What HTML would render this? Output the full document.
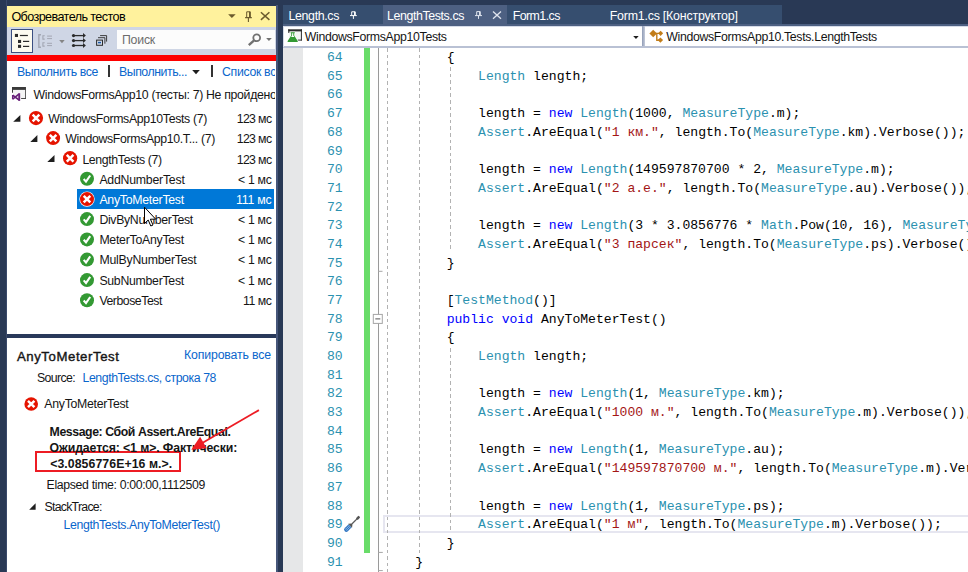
<!DOCTYPE html>
<html lang="ru"><head><meta charset="utf-8"><title>Обозреватель тестов</title>
<style>
html,body{margin:0;padding:0}
body{width:968px;height:572px;overflow:hidden;background:#293955;position:relative;font-family:"Liberation Sans",sans-serif}
.a{position:absolute}
.t{position:absolute;white-space:pre;line-height:16px;font-family:"Liberation Sans",sans-serif}
.c{position:absolute;white-space:pre;line-height:18px;font-size:13.100px;font-family:"Liberation Mono",monospace}
svg{position:absolute;overflow:visible}
</style></head><body>
<!-- ===== left panel ===== -->
<div class="a" style="left:6px;top:0;width:1.2px;height:572px;background:#3a4a6b"></div>
<div class="a" style="left:7px;top:5.5px;width:269.2px;height:567px;background:#fff"></div>
<div class="a" style="left:276.2px;top:5px;width:1.6px;height:567px;background:#46567a"></div>
<div class="a" style="left:7px;top:5.5px;width:269.2px;height:21.5px;background:#fff29d"></div>
<div class="a" style="left:7px;top:27px;width:269.2px;height:27.8px;background:#cfd6e5"></div>
<div class="a" style="left:7px;top:54.8px;width:269.2px;height:6.2px;background:#fe0000"></div>
<div class="a" style="left:7px;top:333.7px;width:269.2px;height:4.1px;background:#29395a"></div>
<!-- toolbar button 1 -->
<div class="a" style="left:11.2px;top:29.1px;width:21.7px;height:23.8px;box-sizing:border-box;border:1px solid #3b4f81;background:#fdfbf0"></div>
<!-- search box -->
<div class="a" style="left:116.6px;top:29.8px;width:158.8px;height:19.3px;background:#fcfcfc"></div>
<!-- selected row -->
<div class="a" style="left:77px;top:189px;width:196.7px;height:19.8px;background:#0078d7"></div>
<!-- separators in links row -->
<div class="a" style="left:108.2px;top:64.8px;width:1.8px;height:12.2px;background:#333"></div>
<div class="a" style="left:211.2px;top:64.8px;width:1.8px;height:12.2px;background:#333"></div>
<!-- red annotation rect -->
<div class="a" style="left:34.5px;top:451.3px;width:146.4px;height:21.2px;box-sizing:border-box;border:2px solid #ed1c24"></div>

<!-- ===== editor ===== -->
<div class="a" style="left:283px;top:5.3px;width:99.8px;height:19px;background:#364e6f"></div>
<div class="a" style="left:382.8px;top:5.3px;width:124.2px;height:21px;background:#4d6082"></div>
<div class="a" style="left:507px;top:5.3px;width:274.7px;height:19px;background:#364e6f"></div>
<div class="a" style="left:283px;top:23.8px;width:685px;height:2.3px;background:#4d6082"></div>
<div class="a" style="left:283px;top:26.1px;width:685px;height:546px;background:#fff"></div>
<!-- nav bar -->
<div class="a" style="left:283px;top:46.3px;width:685px;height:1.4px;background:#b9c1d4"></div>
<div class="a" style="left:283px;top:26.1px;width:685px;height:0.9px;background:#d5dbe8"></div>
<div class="a" style="left:283px;top:26.1px;width:1.4px;height:20.5px;background:#d5dbe8"></div>
<div class="a" style="left:641.6px;top:26.1px;width:3.6px;height:20.4px;background:linear-gradient(90deg,#8f9bb5,#c5ccdb)"></div>
<!-- margin -->
<div class="a" style="left:283px;top:47.7px;width:19.6px;height:525px;background:#e6e7e8"></div>
<!-- green change bar -->
<div class="a" style="left:364.4px;top:47.7px;width:5.7px;height:505px;background:#69dc69"></div>
<!-- outlining line -->
<div class="a" style="left:377.7px;top:47.7px;width:1.2px;height:525px;background:#9a9a9a"></div>
<!-- current line box -->
<div class="a" style="left:383.2px;top:515.2px;width:590px;height:17.7px;box-sizing:border-box;border:2px solid #e6e6f0"></div>
<!-- indent guides -->
<div class="a" style="left:387px;top:47.7px;width:1.1px;height:525px;background:repeating-linear-gradient(to bottom,#b2b2b2 0,#b2b2b2 3.6px,transparent 3.6px,transparent 6.6px)"></div>
<div class="a" style="left:419px;top:47.7px;width:1.1px;height:508px;background:repeating-linear-gradient(to bottom,#b2b2b2 0,#b2b2b2 3.6px,transparent 3.6px,transparent 6.6px)"></div>
<div class="a" style="left:450px;top:67.3px;width:1.1px;height:184px;background:repeating-linear-gradient(to bottom,#b2b2b2 0,#b2b2b2 3.6px,transparent 3.6px,transparent 6.6px)"></div>
<div class="a" style="left:450px;top:347.5px;width:1.1px;height:184px;background:repeating-linear-gradient(to bottom,#b2b2b2 0,#b2b2b2 3.6px,transparent 3.6px,transparent 6.6px)"></div>

<svg width="968" height="572" style="left:0;top:0" viewBox="0 0 968 572">
<path d="M228.1,14.2L235.7,14.2L231.9,18Z" fill="#6b5b2d"/>
<path d="M246.7,17.4V11.8H250.2V17.4" stroke="#6b5b2d" stroke-width="1" fill="none"/><path d="M249.8,11.8V17.4" stroke="#6b5b2d" stroke-width="1.6" fill="none"/><path d="M245.1,17.6H251.8M248.4,17.6V21.9" stroke="#6b5b2d" stroke-width="1.1" fill="none"/>
<path d="M260.9,12.2L269.4,19.9M269.4,12.2L260.9,19.9" stroke="#6b5b2d" stroke-width="1.5" fill="none"/>
<rect x="14.9" y="33.9" width="3.1" height="3.1" fill="#2b2b2b"/><rect x="19.9" y="34.9" width="8" height="1.2" fill="#2b2b2b"/>
<rect x="18" y="39.9" width="3.1" height="3.1" fill="#2b2b2b"/><rect x="23" y="40.8" width="6.2" height="1.2" fill="#2b2b2b"/>
<rect x="18" y="44.8" width="3.1" height="3.1" fill="#2b2b2b"/><rect x="23" y="45.8" width="6.2" height="1.2" fill="#2b2b2b"/>
<path d="M41,34.8H38.85V47.2H41" stroke="#a3a7b3" stroke-width="1.4" fill="none"/>
<path d="M44.7,35.8H42.9V39.1H44.7M44.7,42.7H42.9V46.1H44.7" stroke="#a3a7b3" stroke-width="1.1" fill="none"/>
<path d="M47.1,36.1H52M47.1,38.6H52M47.1,43.3H52M47.1,45.6H52" stroke="#a3a7b3" stroke-width="1" fill="none"/>
<path d="M59.2,40L64.7,40L61.95,43.3Z" fill="#858585"/>
<circle cx="73.5" cy="35.6" r="1.6" fill="#2b2b2b"/><path d="M73.5,35.6H84.5" stroke="#2b2b2b" stroke-width="1.3" fill="none"/><path d="M83,33.1L85.9,35.6L83,38.1Z" fill="#2b2b2b"/>
<circle cx="73.5" cy="40.6" r="1.6" fill="#2b2b2b"/><path d="M73.5,40.6H84.5" stroke="#2b2b2b" stroke-width="1.3" fill="none"/><path d="M83,38.1L85.9,40.6L83,43.1Z" fill="#2b2b2b"/>
<circle cx="73.5" cy="45.5" r="1.6" fill="#2b2b2b"/><path d="M73.5,45.5H84.5" stroke="#2b2b2b" stroke-width="1.3" fill="none"/><path d="M83,43.0L85.9,45.5L83,48.0Z" fill="#2b2b2b"/>
<rect x="96.6" y="40.1" width="5.9" height="5.2" stroke="#2b2b2b" stroke-width="1" fill="none"/><rect x="98" y="41.9" width="3" height="1.4" fill="#1a5aa8"/>
<path d="M98,37.7H104.9V43.7" stroke="#2b2b2b" stroke-width="0.9" fill="none"/><path d="M100.1,35.6H106.6V41.6" stroke="#2b2b2b" stroke-width="0.9" fill="none"/>
<circle cx="256.7" cy="37.8" r="3.4" stroke="#717171" stroke-width="1.8" fill="none"/><path d="M254.4,40.1L248.8,45.1" stroke="#717171" stroke-width="2.4" fill="none"/>
<path d="M266.1,38L271.8,38L268.95,40.9Z" fill="#717171"/>
<path d="M192.2,69.9L199.8,69.9L196,74.2Z" fill="#1e1e1e"/>
<rect x="13" y="89.9" width="12" height="8.1" fill="#f5f5f5"/>
<path d="M12,87H25.8V89.9H12Z" fill="#3a3a3a"/><path d="M12,87H13V92.7H12Z" fill="#3a3a3a"/><path d="M25,87H25.8V98.9H25Z" fill="#3a3a3a"/><path d="M21.1,98H25.8V98.9H21.1Z" fill="#3a3a3a"/>
<path d="M12.7,95.2L18.9,99.9M12.7,99.2L18.9,94.2" stroke="#68217a" stroke-width="1.7" fill="none"/><path d="M12.5,95V99.3" stroke="#68217a" stroke-width="1.1" fill="none"/><path d="M19.2,93.2V100.9" stroke="#68217a" stroke-width="1.9" fill="none"/>
<path d="M20.4,114.9L20.4,121.8L13.2,121.8Z" fill="#1e1e1e"/>
<path d="M37.4,135.1L37.4,141.9L30.3,141.9Z" fill="#1e1e1e"/>
<path d="M54.5,154.9L54.5,161.9L47.3,161.9Z" fill="#1e1e1e"/>
<circle cx="36" cy="118.05" r="7.1" fill="#e51400"/><path d="M32.66,114.71L39.34,121.39M39.34,114.71L32.66,121.39" stroke="#fff" stroke-width="2.5" stroke-linecap="butt" fill="none"/>
<circle cx="53.1" cy="138.1" r="7.0" fill="#e51400"/><path d="M49.81,134.81L56.39,141.39M56.39,134.81L49.81,141.39" stroke="#fff" stroke-width="2.5" stroke-linecap="butt" fill="none"/>
<circle cx="70.1" cy="158.2" r="7.1" fill="#e51400"/><path d="M66.76,154.86L73.44,161.54M73.44,154.86L66.76,161.54" stroke="#fff" stroke-width="2.5" stroke-linecap="butt" fill="none"/>
<circle cx="87" cy="178.7" r="7.0" fill="#339933"/><path d="M83.70,179.00L86.00,181.60L90.20,175.50" stroke="#fff" stroke-width="2.1" fill="none" stroke-linejoin="miter"/>
<circle cx="87" cy="199.1" r="7.7" fill="#fff"/><circle cx="87" cy="199.1" r="7.0" fill="#e51400"/><path d="M83.71,195.81L90.29,202.39M90.29,195.81L83.71,202.39" stroke="#fff" stroke-width="2.5" stroke-linecap="butt" fill="none"/>
<circle cx="87" cy="219.1" r="7.0" fill="#339933"/><path d="M83.70,219.40L86.00,222.00L90.20,215.90" stroke="#fff" stroke-width="2.1" fill="none" stroke-linejoin="miter"/>
<circle cx="87" cy="239.4" r="7.0" fill="#339933"/><path d="M83.70,239.70L86.00,242.30L90.20,236.20" stroke="#fff" stroke-width="2.1" fill="none" stroke-linejoin="miter"/>
<circle cx="87" cy="259.6" r="7.0" fill="#339933"/><path d="M83.70,259.90L86.00,262.50L90.20,256.40" stroke="#fff" stroke-width="2.1" fill="none" stroke-linejoin="miter"/>
<circle cx="87" cy="280.1" r="7.0" fill="#339933"/><path d="M83.70,280.40L86.00,283.00L90.20,276.90" stroke="#fff" stroke-width="2.1" fill="none" stroke-linejoin="miter"/>
<circle cx="87" cy="300.2" r="7.0" fill="#339933"/><path d="M83.70,300.50L86.00,303.10L90.20,297.00" stroke="#fff" stroke-width="2.1" fill="none" stroke-linejoin="miter"/>
<circle cx="31.2" cy="404" r="6.8" fill="#e51400"/><path d="M28.00,400.80L34.40,407.20M34.40,400.80L28.00,407.20" stroke="#fff" stroke-width="2.5" stroke-linecap="butt" fill="none"/>
<path d="M35.6,503.3L35.6,509.7L29.2,509.7Z" fill="#1e1e1e"/>
<path d="M351.7,15.3V11.8H355.1V15.3" stroke="#fff" stroke-width="1" fill="none"/><path d="M354.8,11.8V15.3" stroke="#fff" stroke-width="1.5" fill="none"/><path d="M350,15.6H356.8M353.4,15.6V18.9" stroke="#fff" stroke-width="1" fill="none"/>
<path d="M476.7,15.3V11.6H480.1V15.3" stroke="#dfe4ee" stroke-width="1" fill="none"/><path d="M479.8,11.6V15.3" stroke="#dfe4ee" stroke-width="1.5" fill="none"/><path d="M475,15.6H482M478.5,15.6V18.9" stroke="#dfe4ee" stroke-width="1" fill="none"/>
<path d="M493,11.5L501,18.8M501,11.5L493,18.8" stroke="#dfe4ee" stroke-width="1.3" fill="none"/>
<rect x="289" y="31.4" width="12" height="8.6" fill="#f5f5f5"/>
<path d="M288.3,29.3H301.9V31.4H288.3Z" fill="#2d2d2d"/><path d="M288.3,29.3H289.3V33H288.3Z" fill="#2d2d2d"/><path d="M300.9,29.3H301.9V40.6H300.9Z" fill="#2d2d2d"/><path d="M297.5,39.6H301.9V40.6H297.5Z" fill="#2d2d2d"/>
<path d="M290.6,32.3H294.8V33.3H294.2V35.6L297.9,41.2Q298,41.9 297.2,41.9H288.1Q287.3,41.9 287.5,41.2L291.2,35.6V33.3H290.6Z" fill="#339933" stroke="#fff" stroke-width="1.2" paint-order="stroke"/><path d="M292.1,33.3H293.3V35.4L294.4,37.1H291L292.1,35.4Z" fill="#fff"/>
<path d="M633.2,35.9L638.7,35.9L635.95,39Z" fill="#1e1e1e"/>
<path d="M653.2,29.8L657,33.4L653.2,37.2L649.4,33.4Z" fill="#c27d1a"/>
<path d="M656,33.4H659.5M656.8,33.4V40.2H659.5" stroke="#c27d1a" stroke-width="1.4" fill="none"/>
<path d="M660.6,30.8L663.1,33.3L660.6,35.9L658.1,33.3Z" fill="#c27d1a"/><path d="M660.4,37.5L663.1,40.1L660.4,42.8L657.7,40.1Z" fill="#c27d1a"/>
<rect x="373.3" y="314.4" width="9" height="9" fill="#fff" stroke="#a5a5a5" stroke-width="1"/><path d="M375.3,318.9H380.3" stroke="#555" stroke-width="1" fill="none"/>
<path d="M378,271.3H382.5M378,552.4H382.8M378,570.6H382.8" stroke="#a5a5a5" stroke-width="1" fill="none"/>
<g transform="translate(344.9,531) rotate(-45)"><path d="M2,-2.2H7.4V2.2H2A2.2,2.2 0 0 1 2,-2.2Z" fill="#2f75c0"/><path d="M2.6,-2.2V2.2M4.3,-2.2V2.2M6,-2.2V2.2M1,-0.7H7.4M1,0.8H7.4" stroke="#9cc3ee" stroke-width="0.5" fill="none"/><path d="M7.4,-2.7L10,-0.7V0.7L7.4,2.7Z" fill="#555"/><rect x="9.8" y="-0.65" width="8" height="1.3" fill="#5a5a5a"/><rect x="16.6" y="-1.3" width="4" height="2.6" rx="1" fill="#555"/></g>
</svg>
<div class="a" style="left:0;top:0;width:275.4px;height:572px;overflow:hidden">
<span class="t" style="left:11.40px;top:9.43px;font-size:12.6px;color:#000;letter-spacing:-0.590px;">Обозреватель тестов</span>
<span class="t" style="left:122.00px;top:32.24px;font-size:12.3px;color:#6d6d6d;letter-spacing:-0.216px;">Поиск</span>
<span class="t" style="left:17.00px;top:64.24px;font-size:12.3px;color:#0a66cc;letter-spacing:-0.381px;">Выполнить все</span>
<span class="t" style="left:119.00px;top:64.24px;font-size:12.3px;color:#0a66cc;letter-spacing:-0.451px;">Выполнить...</span>
<span class="t" style="left:222.00px;top:64.24px;font-size:12.3px;color:#0a66cc;letter-spacing:-0.319px;">Список вс</span>
<span class="t" style="left:33.50px;top:86.94px;font-size:12.3px;color:#151515;letter-spacing:-0.323px;">WindowsFormsApp10 (тесты: 7) Не пройдено</span>
<span class="t" style="left:48.20px;top:110.64px;font-size:12.3px;color:#151515;letter-spacing:-0.332px;">WindowsFormsApp10Tests (7)</span>
<span class="t" style="left:236.70px;top:110.64px;font-size:12.3px;color:#151515;letter-spacing:-0.624px;">123 мс</span>
<span class="t" style="left:65.30px;top:130.84px;font-size:12.3px;color:#151515;letter-spacing:-0.340px;">WindowsFormsApp10.T... (7)</span>
<span class="t" style="left:236.70px;top:130.84px;font-size:12.3px;color:#151515;letter-spacing:-0.624px;">123 мс</span>
<span class="t" style="left:82.40px;top:151.84px;font-size:12.3px;color:#151515;letter-spacing:-0.358px;">LengthTests (7)</span>
<span class="t" style="left:236.70px;top:151.84px;font-size:12.3px;color:#151515;letter-spacing:-0.624px;">123 мс</span>
<span class="t" style="left:99.40px;top:171.74px;font-size:12.3px;color:#151515;letter-spacing:-0.229px;">AddNumberTest</span>
<span class="t" style="left:238.00px;top:171.74px;font-size:12.3px;color:#151515;letter-spacing:-0.328px;">&lt; 1 мс</span>
<span class="t" style="left:99.40px;top:191.54px;font-size:12.3px;color:#ffffff;letter-spacing:-0.262px;">AnyToMeterTest</span>
<span class="t" style="left:236.00px;top:191.54px;font-size:12.3px;color:#ffffff;letter-spacing:-0.203px;">111 мс</span>
<span class="t" style="left:99.40px;top:212.04px;font-size:12.3px;color:#151515;letter-spacing:-0.327px;">DivByNumberTest</span>
<span class="t" style="left:238.00px;top:212.04px;font-size:12.3px;color:#151515;letter-spacing:-0.328px;">&lt; 1 мс</span>
<span class="t" style="left:99.40px;top:231.64px;font-size:12.3px;color:#151515;letter-spacing:-0.262px;">MeterToAnyTest</span>
<span class="t" style="left:238.00px;top:231.64px;font-size:12.3px;color:#151515;letter-spacing:-0.328px;">&lt; 1 мс</span>
<span class="t" style="left:99.40px;top:251.94px;font-size:12.3px;color:#151515;letter-spacing:-0.230px;">MulByNumberTest</span>
<span class="t" style="left:238.00px;top:251.94px;font-size:12.3px;color:#151515;letter-spacing:-0.328px;">&lt; 1 мс</span>
<span class="t" style="left:99.40px;top:272.84px;font-size:12.3px;color:#151515;letter-spacing:-0.282px;">SubNumberTest</span>
<span class="t" style="left:238.00px;top:272.84px;font-size:12.3px;color:#151515;letter-spacing:-0.328px;">&lt; 1 мс</span>
<span class="t" style="left:99.40px;top:292.64px;font-size:12.3px;color:#151515;letter-spacing:-0.472px;">VerboseTest</span>
<span class="t" style="left:243.00px;top:292.64px;font-size:12.3px;color:#151515;letter-spacing:-0.459px;">11 мс</span>
<span class="t" style="left:16.90px;top:348.63px;font-size:13.2px;color:#151515;letter-spacing:0.575px;-webkit-text-stroke:0.38px #151515;">AnyToMeterTest</span>
<span class="t" style="left:184.00px;top:346.74px;font-size:12.3px;color:#0a66cc;letter-spacing:-0.144px;">Копировать все</span>
<span class="t" style="left:37.00px;top:370.24px;font-size:12.3px;color:#151515;letter-spacing:-0.627px;">Source:</span>
<span class="t" style="left:82.50px;top:370.24px;font-size:12.3px;color:#0a66cc;letter-spacing:-0.416px;">LengthTests.cs, строка 78</span>
<span class="t" style="left:44.30px;top:395.54px;font-size:12.3px;color:#151515;letter-spacing:-0.284px;">AnyToMeterTest</span>
<span class="t" style="left:49.60px;top:423.74px;font-size:12.3px;color:#151515;font-weight:700;letter-spacing:-0.419px;">Message: Сбой Assert.AreEqual.</span>
<span class="t" style="left:49.60px;top:439.84px;font-size:12.3px;color:#151515;font-weight:700;letter-spacing:-0.101px;">Ожидается: &lt;1 м&gt;. Фактически:</span>
<span class="t" style="left:50.20px;top:455.74px;font-size:12.3px;color:#151515;font-weight:700;letter-spacing:0.063px;">&lt;3.0856776E+16 м.&gt;.</span>
<span class="t" style="left:46.60px;top:476.64px;font-size:12.3px;color:#151515;letter-spacing:-0.346px;">Elapsed time: 0:00:00,1112509</span>
<span class="t" style="left:44.50px;top:498.64px;font-size:12.3px;color:#151515;letter-spacing:-0.732px;">StackTrace:</span>
<span class="t" style="left:63.50px;top:516.64px;font-size:12.3px;color:#0a66cc;letter-spacing:-0.343px;">LengthTests.AnyToMeterTest()</span>
</div>
<span class="t" style="left:288.50px;top:8.40px;font-size:12.4px;color:#ffffff;letter-spacing:-0.359px;">Length.cs</span>
<span class="t" style="left:387.00px;top:8.40px;font-size:12.4px;color:#ffffff;letter-spacing:-0.404px;">LengthTests.cs</span>
<span class="t" style="left:512.70px;top:8.40px;font-size:12.4px;color:#ffffff;letter-spacing:-0.568px;">Form1.cs</span>
<span class="t" style="left:609.70px;top:8.40px;font-size:12.4px;color:#ffffff;letter-spacing:-0.210px;">Form1.cs [Конструктор]</span>
<span class="t" style="left:304.70px;top:29.04px;font-size:12.3px;color:#151515;letter-spacing:-0.317px;">WindowsFormsApp10Tests</span>
<span class="t" style="left:666.30px;top:29.04px;font-size:12.3px;color:#151515;letter-spacing:-0.332px;">WindowsFormsApp10.Tests.LengthTests</span>
<span class="c" style="left:326.88px;top:49.00px;color:#2b91af">64</span>
<span class="c" style="left:446.64px;top:49.00px;color:#000000">{</span>
<span class="c" style="left:326.88px;top:68.00px;color:#2b91af">65</span>
<span class="c" style="left:478.08px;top:68.00px;color:#2b91af">Length</span>
<span class="c" style="left:525.24px;top:68.00px;color:#000000"> length;</span>
<span class="c" style="left:326.88px;top:86.00px;color:#2b91af">66</span>
<span class="c" style="left:326.88px;top:105.00px;color:#2b91af">67</span>
<span class="c" style="left:478.08px;top:105.00px;color:#000000">length = </span>
<span class="c" style="left:548.82px;top:105.00px;color:#0000ff">new</span>
<span class="c" style="left:572.40px;top:105.00px;color:#000000"> </span>
<span class="c" style="left:580.26px;top:105.00px;color:#2b91af">Length</span>
<span class="c" style="left:627.42px;top:105.00px;color:#000000">(1000, </span>
<span class="c" style="left:682.44px;top:105.00px;color:#2b91af">MeasureType</span>
<span class="c" style="left:768.90px;top:105.00px;color:#000000">.m);</span>
<span class="c" style="left:326.88px;top:124.00px;color:#2b91af">68</span>
<span class="c" style="left:478.08px;top:124.00px;color:#2b91af">Assert</span>
<span class="c" style="left:525.24px;top:124.00px;color:#000000">.AreEqual(</span>
<span class="c" style="left:603.84px;top:124.00px;color:#a31515">&quot;1 км.&quot;</span>
<span class="c" style="left:658.86px;top:124.00px;color:#000000">, length.To(</span>
<span class="c" style="left:753.18px;top:124.00px;color:#2b91af">MeasureType</span>
<span class="c" style="left:839.64px;top:124.00px;color:#000000">.km).Verbose());</span>
<span class="c" style="left:326.88px;top:143.00px;color:#2b91af">69</span>
<span class="c" style="left:326.88px;top:161.00px;color:#2b91af">70</span>
<span class="c" style="left:478.08px;top:161.00px;color:#000000">length = </span>
<span class="c" style="left:548.82px;top:161.00px;color:#0000ff">new</span>
<span class="c" style="left:572.40px;top:161.00px;color:#000000"> </span>
<span class="c" style="left:580.26px;top:161.00px;color:#2b91af">Length</span>
<span class="c" style="left:627.42px;top:161.00px;color:#000000">(149597870700 * 2, </span>
<span class="c" style="left:776.76px;top:161.00px;color:#2b91af">MeasureType</span>
<span class="c" style="left:863.22px;top:161.00px;color:#000000">.m);</span>
<span class="c" style="left:326.88px;top:180.00px;color:#2b91af">71</span>
<span class="c" style="left:478.08px;top:180.00px;color:#2b91af">Assert</span>
<span class="c" style="left:525.24px;top:180.00px;color:#000000">.AreEqual(</span>
<span class="c" style="left:603.84px;top:180.00px;color:#a31515">&quot;2 а.е.&quot;</span>
<span class="c" style="left:666.72px;top:180.00px;color:#000000">, length.To(</span>
<span class="c" style="left:761.04px;top:180.00px;color:#2b91af">MeasureType</span>
<span class="c" style="left:847.50px;top:180.00px;color:#000000">.au).Verbose());</span>
<span class="c" style="left:326.88px;top:199.00px;color:#2b91af">72</span>
<span class="c" style="left:326.88px;top:217.00px;color:#2b91af">73</span>
<span class="c" style="left:478.08px;top:217.00px;color:#000000">length = </span>
<span class="c" style="left:548.82px;top:217.00px;color:#0000ff">new</span>
<span class="c" style="left:572.40px;top:217.00px;color:#000000"> </span>
<span class="c" style="left:580.26px;top:217.00px;color:#2b91af">Length</span>
<span class="c" style="left:627.42px;top:217.00px;color:#000000">(3 * 3.0856776 * </span>
<span class="c" style="left:761.04px;top:217.00px;color:#2b91af">Math</span>
<span class="c" style="left:792.48px;top:217.00px;color:#000000">.Pow(10, 16), </span>
<span class="c" style="left:902.52px;top:217.00px;color:#2b91af">MeasureType</span>
<span class="c" style="left:988.98px;top:217.00px;color:#000000">.ps);</span>
<span class="c" style="left:326.88px;top:236.00px;color:#2b91af">74</span>
<span class="c" style="left:478.08px;top:236.00px;color:#2b91af">Assert</span>
<span class="c" style="left:525.24px;top:236.00px;color:#000000">.AreEqual(</span>
<span class="c" style="left:603.84px;top:236.00px;color:#a31515">&quot;3 парсек&quot;</span>
<span class="c" style="left:682.44px;top:236.00px;color:#000000">, length.To(</span>
<span class="c" style="left:776.76px;top:236.00px;color:#2b91af">MeasureType</span>
<span class="c" style="left:863.22px;top:236.00px;color:#000000">.ps).Verbose());</span>
<span class="c" style="left:326.88px;top:255.00px;color:#2b91af">75</span>
<span class="c" style="left:446.64px;top:255.00px;color:#000000">}</span>
<span class="c" style="left:326.88px;top:273.00px;color:#2b91af">76</span>
<span class="c" style="left:326.88px;top:292.00px;color:#2b91af">77</span>
<span class="c" style="left:446.64px;top:292.00px;color:#000000">[</span>
<span class="c" style="left:454.50px;top:292.00px;color:#2b91af">TestMethod</span>
<span class="c" style="left:533.10px;top:292.00px;color:#000000">()]</span>
<span class="c" style="left:326.88px;top:311.00px;color:#2b91af">78</span>
<span class="c" style="left:446.64px;top:311.00px;color:#0000ff">public</span>
<span class="c" style="left:493.80px;top:311.00px;color:#000000"> </span>
<span class="c" style="left:501.66px;top:311.00px;color:#0000ff">void</span>
<span class="c" style="left:533.10px;top:311.00px;color:#000000"> AnyToMeterTest()</span>
<span class="c" style="left:326.88px;top:329.00px;color:#2b91af">79</span>
<span class="c" style="left:446.64px;top:329.00px;color:#000000">{</span>
<span class="c" style="left:326.88px;top:348.00px;color:#2b91af">80</span>
<span class="c" style="left:478.08px;top:348.00px;color:#2b91af">Length</span>
<span class="c" style="left:525.24px;top:348.00px;color:#000000"> length;</span>
<span class="c" style="left:326.88px;top:367.00px;color:#2b91af">81</span>
<span class="c" style="left:326.88px;top:385.00px;color:#2b91af">82</span>
<span class="c" style="left:478.08px;top:385.00px;color:#000000">length = </span>
<span class="c" style="left:548.82px;top:385.00px;color:#0000ff">new</span>
<span class="c" style="left:572.40px;top:385.00px;color:#000000"> </span>
<span class="c" style="left:580.26px;top:385.00px;color:#2b91af">Length</span>
<span class="c" style="left:627.42px;top:385.00px;color:#000000">(1, </span>
<span class="c" style="left:658.86px;top:385.00px;color:#2b91af">MeasureType</span>
<span class="c" style="left:745.32px;top:385.00px;color:#000000">.km);</span>
<span class="c" style="left:326.88px;top:404.00px;color:#2b91af">83</span>
<span class="c" style="left:478.08px;top:404.00px;color:#2b91af">Assert</span>
<span class="c" style="left:525.24px;top:404.00px;color:#000000">.AreEqual(</span>
<span class="c" style="left:603.84px;top:404.00px;color:#a31515">&quot;1000 м.&quot;</span>
<span class="c" style="left:674.58px;top:404.00px;color:#000000">, length.To(</span>
<span class="c" style="left:768.90px;top:404.00px;color:#2b91af">MeasureType</span>
<span class="c" style="left:855.36px;top:404.00px;color:#000000">.m).Verbose());</span>
<span class="c" style="left:326.88px;top:423.00px;color:#2b91af">84</span>
<span class="c" style="left:326.88px;top:441.00px;color:#2b91af">85</span>
<span class="c" style="left:478.08px;top:441.00px;color:#000000">length = </span>
<span class="c" style="left:548.82px;top:441.00px;color:#0000ff">new</span>
<span class="c" style="left:572.40px;top:441.00px;color:#000000"> </span>
<span class="c" style="left:580.26px;top:441.00px;color:#2b91af">Length</span>
<span class="c" style="left:627.42px;top:441.00px;color:#000000">(1, </span>
<span class="c" style="left:658.86px;top:441.00px;color:#2b91af">MeasureType</span>
<span class="c" style="left:745.32px;top:441.00px;color:#000000">.au);</span>
<span class="c" style="left:326.88px;top:460.00px;color:#2b91af">86</span>
<span class="c" style="left:478.08px;top:460.00px;color:#2b91af">Assert</span>
<span class="c" style="left:525.24px;top:460.00px;color:#000000">.AreEqual(</span>
<span class="c" style="left:603.84px;top:460.00px;color:#a31515">&quot;149597870700 м.&quot;</span>
<span class="c" style="left:737.46px;top:460.00px;color:#000000">, length.To(</span>
<span class="c" style="left:831.78px;top:460.00px;color:#2b91af">MeasureType</span>
<span class="c" style="left:918.24px;top:460.00px;color:#000000">.m).Verbose());</span>
<span class="c" style="left:326.88px;top:479.00px;color:#2b91af">87</span>
<span class="c" style="left:326.88px;top:498.00px;color:#2b91af">88</span>
<span class="c" style="left:478.08px;top:498.00px;color:#000000">length = </span>
<span class="c" style="left:548.82px;top:498.00px;color:#0000ff">new</span>
<span class="c" style="left:572.40px;top:498.00px;color:#000000"> </span>
<span class="c" style="left:580.26px;top:498.00px;color:#2b91af">Length</span>
<span class="c" style="left:627.42px;top:498.00px;color:#000000">(1, </span>
<span class="c" style="left:658.86px;top:498.00px;color:#2b91af">MeasureType</span>
<span class="c" style="left:745.32px;top:498.00px;color:#000000">.ps);</span>
<span class="c" style="left:326.88px;top:516.00px;color:#2b91af">89</span>
<span class="c" style="left:478.08px;top:516.00px;color:#2b91af">Assert</span>
<span class="c" style="left:525.24px;top:516.00px;color:#000000">.AreEqual(</span>
<span class="c" style="left:603.84px;top:516.00px;color:#a31515">&quot;1 м&quot;</span>
<span class="c" style="left:643.14px;top:516.00px;color:#000000">, length.To(</span>
<span class="c" style="left:737.46px;top:516.00px;color:#2b91af">MeasureType</span>
<span class="c" style="left:823.92px;top:516.00px;color:#000000">.m).Verbose());</span>
<span class="c" style="left:326.88px;top:535.00px;color:#2b91af">90</span>
<span class="c" style="left:446.64px;top:535.00px;color:#000000">}</span>
<span class="c" style="left:326.88px;top:554.00px;color:#2b91af">91</span>
<span class="c" style="left:415.20px;top:554.00px;color:#000000">}</span>
<svg width="968" height="572" style="left:0;top:0" viewBox="0 0 968 572">
<path d="M258.9,410.1L201,443.8" stroke="#ed1c24" stroke-width="1.8" fill="none"/>
<path d="M191.3,449.7L200.1,436.7L206.7,448.3Z" fill="#ed1c24"/>
<g transform="translate(144.5,207.2)"><path d="M0,0V16.3L3.7,12.8L6.3,18.8L8.5,17.8L5.9,12H11.2Z" fill="#fff" stroke="#000" stroke-width="1" stroke-linejoin="miter"/></g>
</svg>
</body></html>
